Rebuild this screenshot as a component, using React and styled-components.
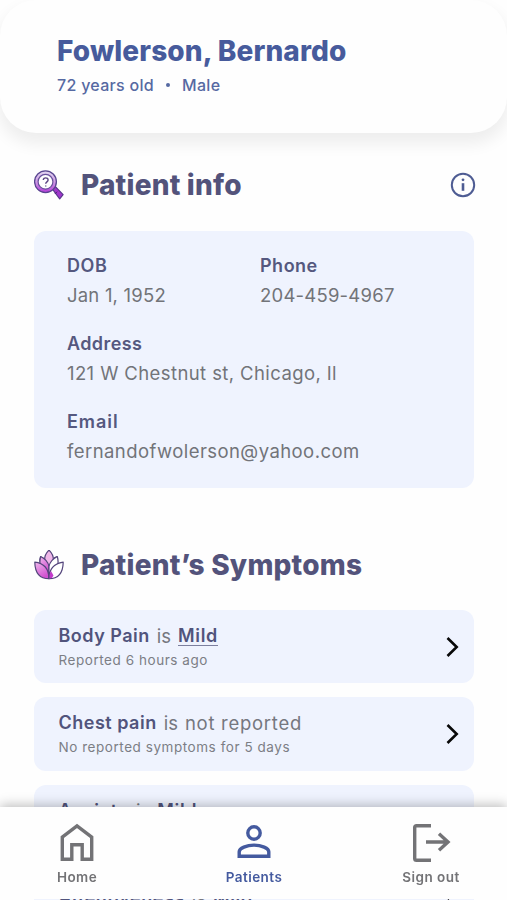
import React from "react";
import styled, { createGlobalStyle } from "styled-components";

const GlobalStyle = createGlobalStyle`
  * { box-sizing: border-box; }
  html, body { margin: 0; height: 100%; overflow: hidden; background: #fefefe; }
  body { font-family: Inter, "Noto Sans", sans-serif; -webkit-font-smoothing: antialiased; }
`;

const Screen = styled.div`
  width: 100%;
  height: 100vh;
  overflow: hidden;
  background: #fefefe;
  display: flex;
  flex-direction: column;
`;

const Header = styled.header`
  flex: none;
  height: 133px;
  padding: 34px 56px 0 57px;
  border-radius: 36px;
  background: #fefefe;
  box-shadow: 0 9px 16px 2px rgba(0, 0, 0, 0.065);
`;

const PatientName = styled.h1`
  margin: 0;
  font-size: 28px;
  line-height: 34px;
  font-weight: 800;
  letter-spacing: 0.13px;
  color: #475b9c;
`;

const Summary = styled.div`
  display: flex;
  align-items: center;
  margin-top: 6px;
  font-size: 16px;
  line-height: 22px;
  font-weight: 500;
  letter-spacing: 0.3px;
  color: #5669a2;
`;

const Dot = styled.span`
  width: 4px;
  height: 4px;
  margin: 0 12px;
  border-radius: 50%;
  background: currentColor;
`;

const Section = styled.section`
  flex: none;
  padding: 0 33px 0 34px;
  margin-top: ${(p) => p.$gap}px;
`;

const SectionHeader = styled.div`
  display: flex;
  align-items: center;
  height: 36px;
  margin-bottom: ${(p) => p.$space}px;
`;

const SectionTitle = styled.h2`
  flex: 1;
  margin: -2px 0 0 17px;
  font-size: 28px;
  line-height: 36px;
  font-weight: 800;
  letter-spacing: 0.2px;
  color: #53537b;
`;

const InfoCard = styled.dl`
  display: grid;
  grid-template-columns: 193px 1fr;
  grid-auto-rows: 78px;
  align-content: start;
  height: 257px;
  margin: 0;
  padding: 22px 33px 0;
  border-radius: 12px;
  background: #eff3fe;
`;

const Field = styled.div`
  grid-column: ${(p) => (p.$wide ? "1 / -1" : "auto")};
`;

const Label = styled.dt`
  font-size: 18px;
  line-height: 26px;
  font-weight: 600;
  letter-spacing: ${(p) => p.$tracking}px;
  color: #55587f;
`;

const Value = styled.dd`
  margin: 3px 0 0;
  font-size: 18.5px;
  line-height: 27px;
  letter-spacing: ${(p) => p.$tracking}px;
  color: #727479;
`;

const SymptomList = styled.ul`
  display: flex;
  flex-direction: column;
  gap: 14px;
  margin: 0;
  padding: 0;
  list-style: none;
`;

const SymptomRow = styled.li`
  display: flex;
  align-items: center;
  justify-content: space-between;
  height: 73.5px;
  padding: 1px 13px 0 24.5px;
  border-radius: 12px;
  background: #eff3fe;
`;

const SymptomTitle = styled.div`
  display: flex;
  gap: 7px;
  font-size: 18.5px;
  line-height: 26px;
  color: #75777f;
`;

const SymptomName = styled.strong`
  font-size: 18px;
  font-weight: 600;
  letter-spacing: 0.5px;
  color: #51547c;
`;

const Severity = styled(SymptomName)`
  height: 23px;
  border-bottom: 1.5px solid #7c7f9e;
  letter-spacing: 0.65px;
`;

const Unreported = styled.span`
  letter-spacing: 0.72px;
`;

const SymptomNote = styled.div`
  font-size: 13.5px;
  line-height: 21px;
  margin-top: 1px;
  letter-spacing: 0.55px;
  color: #7c7e85;
`;

const NavBar = styled.nav`
  position: fixed;
  left: 0;
  right: 0;
  bottom: 1px;
  height: 92px;
  display: flex;
  justify-content: space-between;
  padding: 14px 46px 0 47px;
  background: #fefefe;
  box-shadow: 0 -2px 11px rgba(0, 0, 0, 0.26);
  clip-path: inset(-20px 0 0 0);
`;

const NavItem = styled.a`
  display: flex;
  flex-direction: column;
  align-items: center;
  width: 60px;
  font-size: 13.5px;
  line-height: 20px;
  font-weight: 600;
  letter-spacing: 0.45px;
  white-space: nowrap;
  color: ${(p) => (p.$active ? "#445a9f" : "#737376")};
`;

const NavIcon = styled.svg`
  width: 42px;
  height: 42px;
  margin-bottom: 4px;
  fill: none;
  stroke: currentColor;
  stroke-width: 3.4;
`;

const Chevron = styled.svg`
  width: 18px;
  height: 24px;
  fill: none;
  stroke: #080808;
  stroke-width: 2.6;
`;

const SectionIcon = styled.svg`
  flex: none;
  width: 30px;
  height: 32px;
`;

const InfoIcon = styled.svg`
  width: 26px;
  height: 26px;
  margin-top: -1px;
  margin-right: -1.5px;
  color: #4e5c93;
`;

function MagnifierIcon() {
  return (
    <SectionIcon viewBox="0 0.8 30 32" fill="none">
      <defs>
        <linearGradient id="lens" x1="0" y1="0" x2="0" y2="1">
          <stop offset="0" stopColor="#e3daf1" />
          <stop offset="0.5" stopColor="#cf9be6" />
          <stop offset="1" stopColor="#b13ad6" />
        </linearGradient>
      </defs>
      <path d="m18.3 19.8 2.8-2.7 8 8.4-3.4 4.1z" fill="#a036cc" stroke="#57358a" strokeWidth="1.2" strokeLinejoin="round" />
      <circle cx="11.5" cy="12.5" r="10.9" fill="url(#lens)" stroke="#594690" strokeWidth="1.3" />
      <circle cx="11.5" cy="12.5" r="7.4" fill="#fff" stroke="#69519c" strokeWidth="1.2" />
      <path d="M9.3 10.9c0-3.1 4.9-2.9 4.8-.1 0 1.9-2.4 1.8-2.4 3.8M11.7 16.2v1.2" stroke="#5d4784" strokeWidth="1.4" />
      <path d="m23.1 22.5-2.2 2.2" stroke="#482270" />
    </SectionIcon>
  );
}

function LotusIcon() {
  return (
    <SectionIcon viewBox="0 1.3 30 32" fill="none" stroke="#54457c" strokeWidth="1.2" strokeLinejoin="round">
      <defs>
        <linearGradient id="petal" x1="0" y1="0" x2="0.5" y2="1">
          <stop offset="0" stopColor="#f0b8ec" />
          <stop offset="1" stopColor="#d04fd0" />
        </linearGradient>
      </defs>
      <path d="M6.5 15c-1-4-.5-6 0-7 3 1 6 4 8 8 2-4 5-7 8-8 .6 2 .8 4 0 7" fill="#f1d9f1" />
      <path d="M15 1.4c4 4 5 8 4 12l-4 8-4-8c-1-4 0-8 4-12z" fill="#efb6e8" />
      <path d="M6.7 7.8c4 2 7.5 5.5 8.3 10v7l-8-7c-1.5-3-1.5-6-.3-10z" fill="url(#petal)" />
      <path d="M23.3 7.8c-4 2-7.5 5.5-8.3 10v7l8-7c1.5-3 1.5-6 .3-10z" fill="#fff" />
      <path d="M.8 13.5c9 1 14 7 14.2 16.5C6 30 1 24 .8 13.5z" fill="url(#petal)" />
      <path d="M29.2 13.5C20 15 15 21 15 30c9 0 14-6 14.2-16.5z" fill="#fff" />
      <path d="M15 29.8c0-2.5.5-5 2-7.5l2.5 4.5-1.5 2.5z" fill="#c23acb" stroke="none" />
      <path d="M15 29.8c0-2 0-4-.5-5.5" />
    </SectionIcon>
  );
}

const fields = [
  { label: "DOB", value: "Jan 1, 1952", lt: 0.6, vt: 0.2 },
  { label: "Phone", value: "204-459-4967", lt: 0.5, vt: 0.22 },
  { label: "Address", value: "121 W Chestnut st, Chicago, Il", lt: 0.4, vt: 0.4, wide: true },
  { label: "Email", value: "fernandofwolerson@yahoo.com", lt: 0.95, vt: 0.43, wide: true },
];

const symptoms = [
  { name: "Body Pain", severity: "Mild", note: "Reported 6 hours ago" },
  { name: "Chest pain", note: "No reported symptoms for 5 days" },
  { name: "Anxiety", severity: "Mild", note: "Reported 6 hours ago" },
  { name: "Attentiveness", severity: "Mild", note: "Reported 6 hours ago" },
];

export default function App() {
  return (
    <>
      <GlobalStyle />
      <Screen>
        <Header>
          <PatientName>Fowlerson, Bernardo</PatientName>
          <Summary>
            <span>72 years old</span>
            <Dot />
            <span>Male</span>
          </Summary>
        </Header>

        <Section $gap={34.5}>
          <SectionHeader $space={27.5}>
            <MagnifierIcon />
            <SectionTitle>Patient info</SectionTitle>
            <InfoIcon viewBox="0 0 26 26" fill="none">
              <circle cx="13" cy="13" r="11.2" stroke="currentColor" strokeWidth="2" />
              <circle cx="13" cy="7.8" r="1.4" fill="currentColor" />
              <path d="M13 11.2v7.6" stroke="currentColor" strokeWidth="2.6" />
            </InfoIcon>
          </SectionHeader>
          <InfoCard>
            {fields.map((f) => (
              <Field key={f.label} $wide={f.wide}>
                <Label $tracking={f.lt}>{f.label}</Label>
                <Value $tracking={f.vt}>{f.value}</Value>
              </Field>
            ))}
          </InfoCard>
        </Section>

        <Section $gap={60}>
          <SectionHeader $space={25.5}>
            <LotusIcon />
            <SectionTitle>Patient’s Symptoms</SectionTitle>
          </SectionHeader>
          <SymptomList>
            {symptoms.map((s) => (
              <SymptomRow key={s.name}>
                <div>
                  <SymptomTitle>
                    <SymptomName>{s.name}</SymptomName>
                    <span>is</span>
                    {s.severity ? <Severity>{s.severity}</Severity> : <Unreported>not reported</Unreported>}
                  </SymptomTitle>
                  <SymptomNote>{s.note}</SymptomNote>
                </div>
                <Chevron viewBox="0 0 18 24">
                  <path d="m4.5 3 9.2 9-9.2 9" />
                </Chevron>
              </SymptomRow>
            ))}
          </SymptomList>
        </Section>

        <NavBar>
          <NavItem>
            <NavIcon viewBox="0 0 42 42">
              <path d="M6.3 16.2 21 5l14.7 11.2v22H26.2V23.7H15.8v14.500H6.3z" />
            </NavIcon>
            Home
          </NavItem>
          <NavItem $active>
            <NavIcon viewBox="0 0 42 42">
              <circle cx="21" cy="12" r="6.2" />
              <path d="M6.2 35.2v-4.5c0-3.4 7.5-6.6 14.8-6.6s14.8 3.2 14.8 6.6v4.5z" />
            </NavIcon>
            Patients
          </NavItem>
          <NavItem>
            <NavIcon viewBox="0 0 42 42">
              <path d="M21 4.8H6.5q-1.8 0-1.8 1.8v30.8q0 1.8 1.8 1.8H21M16 21h22M29 12.8l9 8.2-9 8.2" />
            </NavIcon>
            Sign out
          </NavItem>
        </NavBar>
      </Screen>
    </>
  );
}
